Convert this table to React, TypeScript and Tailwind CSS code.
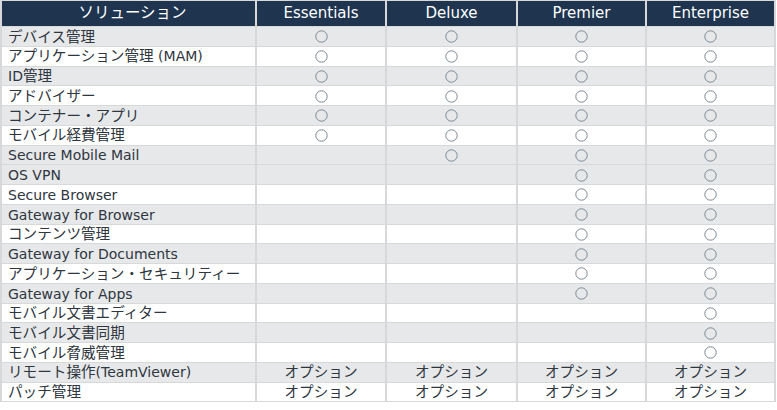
import React from "react";

type Cell = "o" | "" | "opt";

const rows: { name: string; gray: boolean; cells: Cell[] }[] = [
  { name: "デバイス管理", gray: true, cells: ["o", "o", "o", "o"] },
  { name: "アプリケーション管理 (MAM)", gray: false, cells: ["o", "o", "o", "o"] },
  { name: "ID管理", gray: true, cells: ["o", "o", "o", "o"] },
  { name: "アドバイザー", gray: false, cells: ["o", "o", "o", "o"] },
  { name: "コンテナー・アプリ", gray: true, cells: ["o", "o", "o", "o"] },
  { name: "モバイル経費管理", gray: false, cells: ["o", "o", "o", "o"] },
  { name: "Secure Mobile Mail", gray: true, cells: ["", "o", "o", "o"] },
  { name: "OS VPN", gray: true, cells: ["", "", "o", "o"] },
  { name: "Secure Browser", gray: false, cells: ["", "", "o", "o"] },
  { name: "Gateway for Browser", gray: true, cells: ["", "", "o", "o"] },
  { name: "コンテンツ管理", gray: false, cells: ["", "", "o", "o"] },
  { name: "Gateway for Documents", gray: true, cells: ["", "", "o", "o"] },
  { name: "アプリケーション・セキュリティー", gray: false, cells: ["", "", "o", "o"] },
  { name: "Gateway for Apps", gray: true, cells: ["", "", "o", "o"] },
  { name: "モバイル文書エディター", gray: false, cells: ["", "", "", "o"] },
  { name: "モバイル文書同期", gray: true, cells: ["", "", "", "o"] },
  { name: "モバイル脅威管理", gray: false, cells: ["", "", "", "o"] },
  { name: "リモート操作(TeamViewer)", gray: true, cells: ["opt", "opt", "opt", "opt"] },
  { name: "パッチ管理", gray: false, cells: ["opt", "opt", "opt", "opt"] },
];

const headers = ["Essentials", "Deluxe", "Premier", "Enterprise"];

function Mixed({ text }: { text: string }) {
  const parts = text.split(/([\u3000-\u30ff\u4e00-\u9fff]+)/);
  return (
    <span className="whitespace-pre">
      {parts.map((p, i) =>
        /[\u3000-\u30ff\u4e00-\u9fff]/.test(p) ? (
          <span key={i} className="text-[14.6px]">
            {p}
          </span>
        ) : (
          <span key={i}>{p}</span>
        )
      )}
    </span>
  );
}

function Circle() {
  return (
    <svg width="13" height="13" viewBox="0 0 13 13">
      <circle cx="6.5" cy="6.5" r="5.7" fill="none" stroke="#7d8893" strokeWidth="1" />
    </svg>
  );
}

export default function App() {
  return (
    <div
      className="w-[777px] h-[410px] bg-white"
      style={{ fontFamily: '"DejaVu Sans", "Noto Sans CJK JP", sans-serif' }}
    >
      <div className="w-[776px] bg-[#d6d8da] px-[2px] pt-[1px] pb-[1px] grid grid-cols-[253px_128px_129px_127px_127px] gap-x-[2px] gap-y-[1px]">
        <div className="bg-[#1e344f] text-white text-[15.5px] flex items-center justify-center h-[25px] pl-[8px]">
          ソリューション
        </div>
        {headers.map((h) => (
          <div
            key={h}
            className="bg-[#1e344f] text-white text-[15px] flex items-center justify-center h-[25px]"
          >
            {h}
          </div>
        ))}
        {rows.map((r, i) => (
          <React.Fragment key={i}>
            <div
              className={`${r.gray ? "bg-[#e7e8e9]" : "bg-white"} h-[18.75px] flex items-center pl-[6px] pt-[1px] text-[14px] text-[#2e3640] whitespace-nowrap leading-none`}
            >
              <Mixed text={r.name} />
            </div>
            {r.cells.map((c, j) => (
              <div
                key={j}
                className={`${r.gray ? "bg-[#e7e8e9]" : "bg-white"} h-[18.75px] flex items-center justify-center pt-[1px] text-[14.6px] text-[#2e3640] leading-none`}
              >
                {c === "o" ? <Circle /> : c === "opt" ? "オプション" : null}
              </div>
            ))}
          </React.Fragment>
        ))}
      </div>
    </div>
  );
}
